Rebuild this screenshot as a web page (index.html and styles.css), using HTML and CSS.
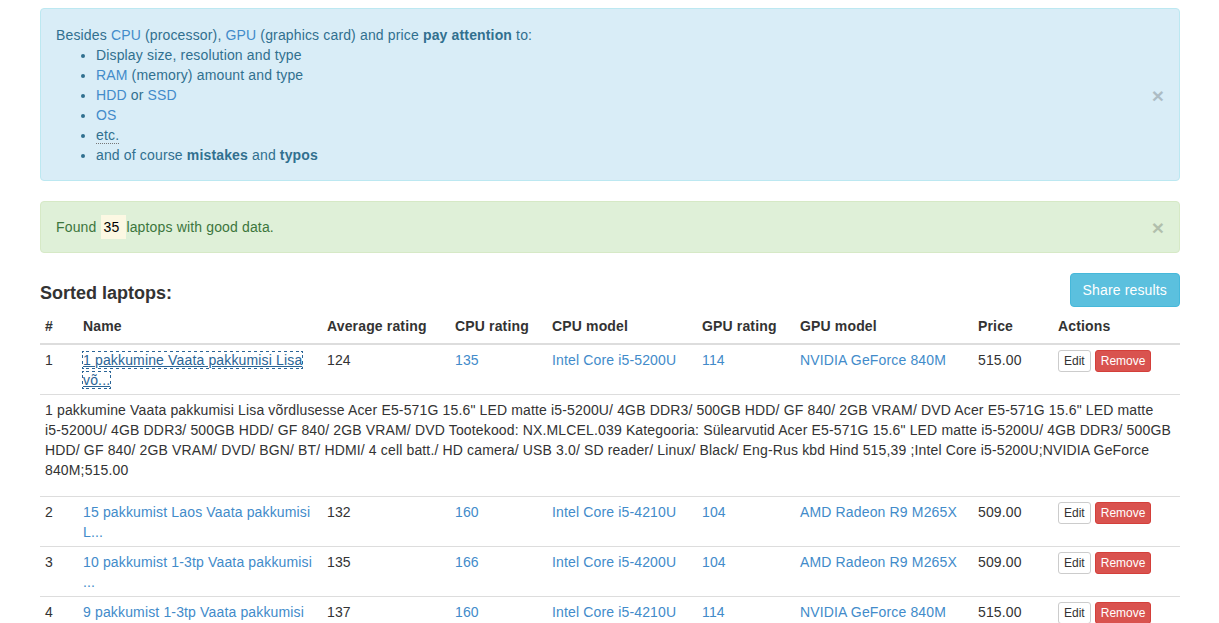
FILE: index.html
```html
<!DOCTYPE html>
<html>
<head>
<meta charset="utf-8">
<title>Sorted laptops</title>
<link rel="stylesheet" href="styles.css">
</head>
<body>
<div class="page">
  <div class="alert alert-info">
    <span class="close">&times;</span>
    Besides <a href="#">CPU</a> (processor), <a href="#">GPU</a> (graphics card) and price <strong>pay attention</strong> to:
    <ul class="tips">
      <li>Display size, resolution and type</li>
      <li><a href="#">RAM</a> (memory) amount and type</li>
      <li><a href="#">HDD</a> or <a href="#">SSD</a></li>
      <li><a href="#">OS</a></li>
      <li><abbr title="et cetera">etc.</abbr></li>
      <li>and of course <strong>mistakes</strong> and <strong>typos</strong></li>
    </ul>
  </div>
  <div class="alert alert-success">
    <span class="close">&times;</span>
    Found <mark>35 </mark>laptops with good data.
  </div>
  <div class="list-head">
    <h4 class="list-title">Sorted laptops:</h4>
    <button class="btn btn-info">Share results</button>
  </div>
  <table class="laptops">
    <colgroup>
      <col class="c-num"><col class="c-name"><col class="c-avg"><col class="c-cpur"><col class="c-cpum"><col class="c-gpur"><col class="c-gpum"><col class="c-price"><col class="c-act">
    </colgroup>
    <thead>
      <tr><th>#</th><th>Name</th><th>Average rating</th><th>CPU rating</th><th>CPU model</th><th>GPU rating</th><th>GPU model</th><th>Price</th><th>Actions</th></tr>
    </thead>
    <tbody>
      <tr>
        <td>1</td>
        <td><a href="#" class="focused">1 pakkumine Vaata pakkumisi Lisa võ...</a></td>
        <td>124</td>
        <td><a href="#">135</a></td>
        <td><a href="#">Intel Core i5-5200U</a></td>
        <td><a href="#">114</a></td>
        <td><a href="#">NVIDIA GeForce 840M</a></td>
        <td>515.00</td>
        <td><button class="btn btn-xs btn-default">Edit</button> <button class="btn btn-xs btn-danger">Remove</button></td>
      </tr>
      <tr class="details">
        <td colspan="9"><p>1 pakkumine Vaata pakkumisi Lisa võrdlusesse Acer E5-571G 15.6" LED matte <span class="nowrap">i5-5200U/</span> 4GB DDR3/ 500GB HDD/ GF 840/ 2GB VRAM/ DVD Acer E5-571G 15.6" LED matte <span class="nowrap">i5-5200U/</span> 4GB DDR3/ 500GB HDD/ GF 840/ 2GB VRAM/ DVD Tootekood: NX.MLCEL.039 Kategooria: Sülearvutid Acer E5-571G 15.6" LED matte <span class="nowrap">i5-5200U/</span> 4GB DDR3/ 500GB HDD/ GF 840/ 2GB VRAM/ DVD/ BGN/ BT/ HDMI/ 4 cell batt./ HD camera/ USB 3.0/ SD reader/ Linux/ Black/ Eng-Rus kbd Hind 515,39 ;Intel Core i5-5200U;NVIDIA GeForce 840M;515.00</p></td>
      </tr>
      <tr>
        <td>2</td>
        <td><a href="#">15 pakkumist Laos Vaata pakkumisi L...</a></td>
        <td>132</td>
        <td><a href="#">160</a></td>
        <td><a href="#">Intel Core i5-4210U</a></td>
        <td><a href="#">104</a></td>
        <td><a href="#">AMD Radeon R9 M265X</a></td>
        <td>509.00</td>
        <td><button class="btn btn-xs btn-default">Edit</button> <button class="btn btn-xs btn-danger">Remove</button></td>
      </tr>
      <tr>
        <td>3</td>
        <td><a href="#">10 pakkumist 1-3tp Vaata pakkumisi ...</a></td>
        <td>135</td>
        <td><a href="#">166</a></td>
        <td><a href="#">Intel Core i5-4200U</a></td>
        <td><a href="#">104</a></td>
        <td><a href="#">AMD Radeon R9 M265X</a></td>
        <td>509.00</td>
        <td><button class="btn btn-xs btn-default">Edit</button> <button class="btn btn-xs btn-danger">Remove</button></td>
      </tr>
      <tr>
        <td>4</td>
        <td><a href="#">9 pakkumist 1-3tp Vaata pakkumisi ...</a></td>
        <td>137</td>
        <td><a href="#">160</a></td>
        <td><a href="#">Intel Core i5-4210U</a></td>
        <td><a href="#">114</a></td>
        <td><a href="#">NVIDIA GeForce 840M</a></td>
        <td>515.00</td>
        <td><button class="btn btn-xs btn-default">Edit</button> <button class="btn btn-xs btn-danger">Remove</button></td>
      </tr>
    </tbody>
  </table>
</div>
</body>
</html>
```
FILE: styles.css
```css
* { box-sizing: border-box; }
html, body { margin: 0; padding: 0; background: #fff; }
body {
  font-family: "Liberation Sans", Arial, Helvetica, sans-serif;
  font-size: 14px;
  line-height: 20px;
  letter-spacing: 0.15px;
  color: #333;
}
a { color: #428bca; text-decoration: none; }
.page {
  width: 1140px;
  margin: 8px 0 0 40px;
}
.alert {
  position: relative;
  padding: 15px 35px 15px 15px;
  border: 1px solid transparent;
  border-radius: 4px;
  margin-bottom: 20px;
}
.alert-info { background: #d9edf7; border-color: #bce8f1; color: #31708f; padding-top: 16px; }
.alert-success { background: #dff0d8; border-color: #d6e9c6; color: #3c763d; }
.alert strong { font-weight: bold; }
.close {
  position: absolute;
  right: 15px;
  top: 50%;
  transform: translateY(-50%);
  font-size: 21px;
  font-weight: bold;
  line-height: 1;
  letter-spacing: 0;
  color: #000;
  opacity: .2;
}
.tips {
  margin: 0;
  padding-left: 40px;
}
abbr {
  text-decoration: none;
  border-bottom: 1px dotted #777;
  cursor: help;
}
mark {
  background: #fcf8e3;
  color: #000;
  padding: 4px 3px;
}
.nowrap { white-space: nowrap; }
.list-head {
  display: flex;
  justify-content: space-between;
  align-items: flex-start;
}
.list-title {
  margin: 10px 0 0;
  font-size: 18px;
  line-height: 20px;
  font-weight: bold;
  letter-spacing: 0;
  color: #333;
}
.btn {
  display: inline-block;
  font-family: inherit;
  font-size: 14px;
  line-height: 20px;
  letter-spacing: 0.15px;
  padding: 6px 12px;
  border: 1px solid transparent;
  border-radius: 4px;
  cursor: pointer;
  vertical-align: middle;
}
.btn-info { background: #5bc0de; border-color: #46b8da; color: #fff; }
.btn-xs {
  padding: 1px 5px;
  font-size: 12px;
  line-height: 18px;
  letter-spacing: 0;
  border-radius: 3px;
}
.btn-default { background: #fff; border-color: #ccc; color: #333; }
.btn-danger { background: #d9534f; border-color: #d43f3a; color: #fff; }
.laptops {
  width: 1140px;
  table-layout: fixed;
  border-collapse: collapse;
  border-spacing: 0;
}
.c-num { width: 38px; }
.c-name { width: 244px; }
.c-avg { width: 128px; }
.c-cpur { width: 97px; }
.c-cpum { width: 150px; }
.c-gpur { width: 98px; }
.c-gpum { width: 178px; }
.c-price { width: 80px; }
.c-act { width: 127px; }
.laptops th {
  text-align: left;
  font-weight: bold;
  vertical-align: bottom;
  padding: 9px 5px 7px;
  border-bottom: 2px solid #ddd;
}
.laptops td {
  padding: 5px 5px 4px;
  vertical-align: top;
  border-top: 1px solid #ddd;
}
.laptops tbody tr:first-child td { border-top: 0; }
.laptops td .btn-xs { vertical-align: top; }
.details p { margin: 0 0 12px; }
a.focused {
  color: #2a6496;
  text-decoration: underline;
  outline: 1px dotted #2a6496;
}
```
